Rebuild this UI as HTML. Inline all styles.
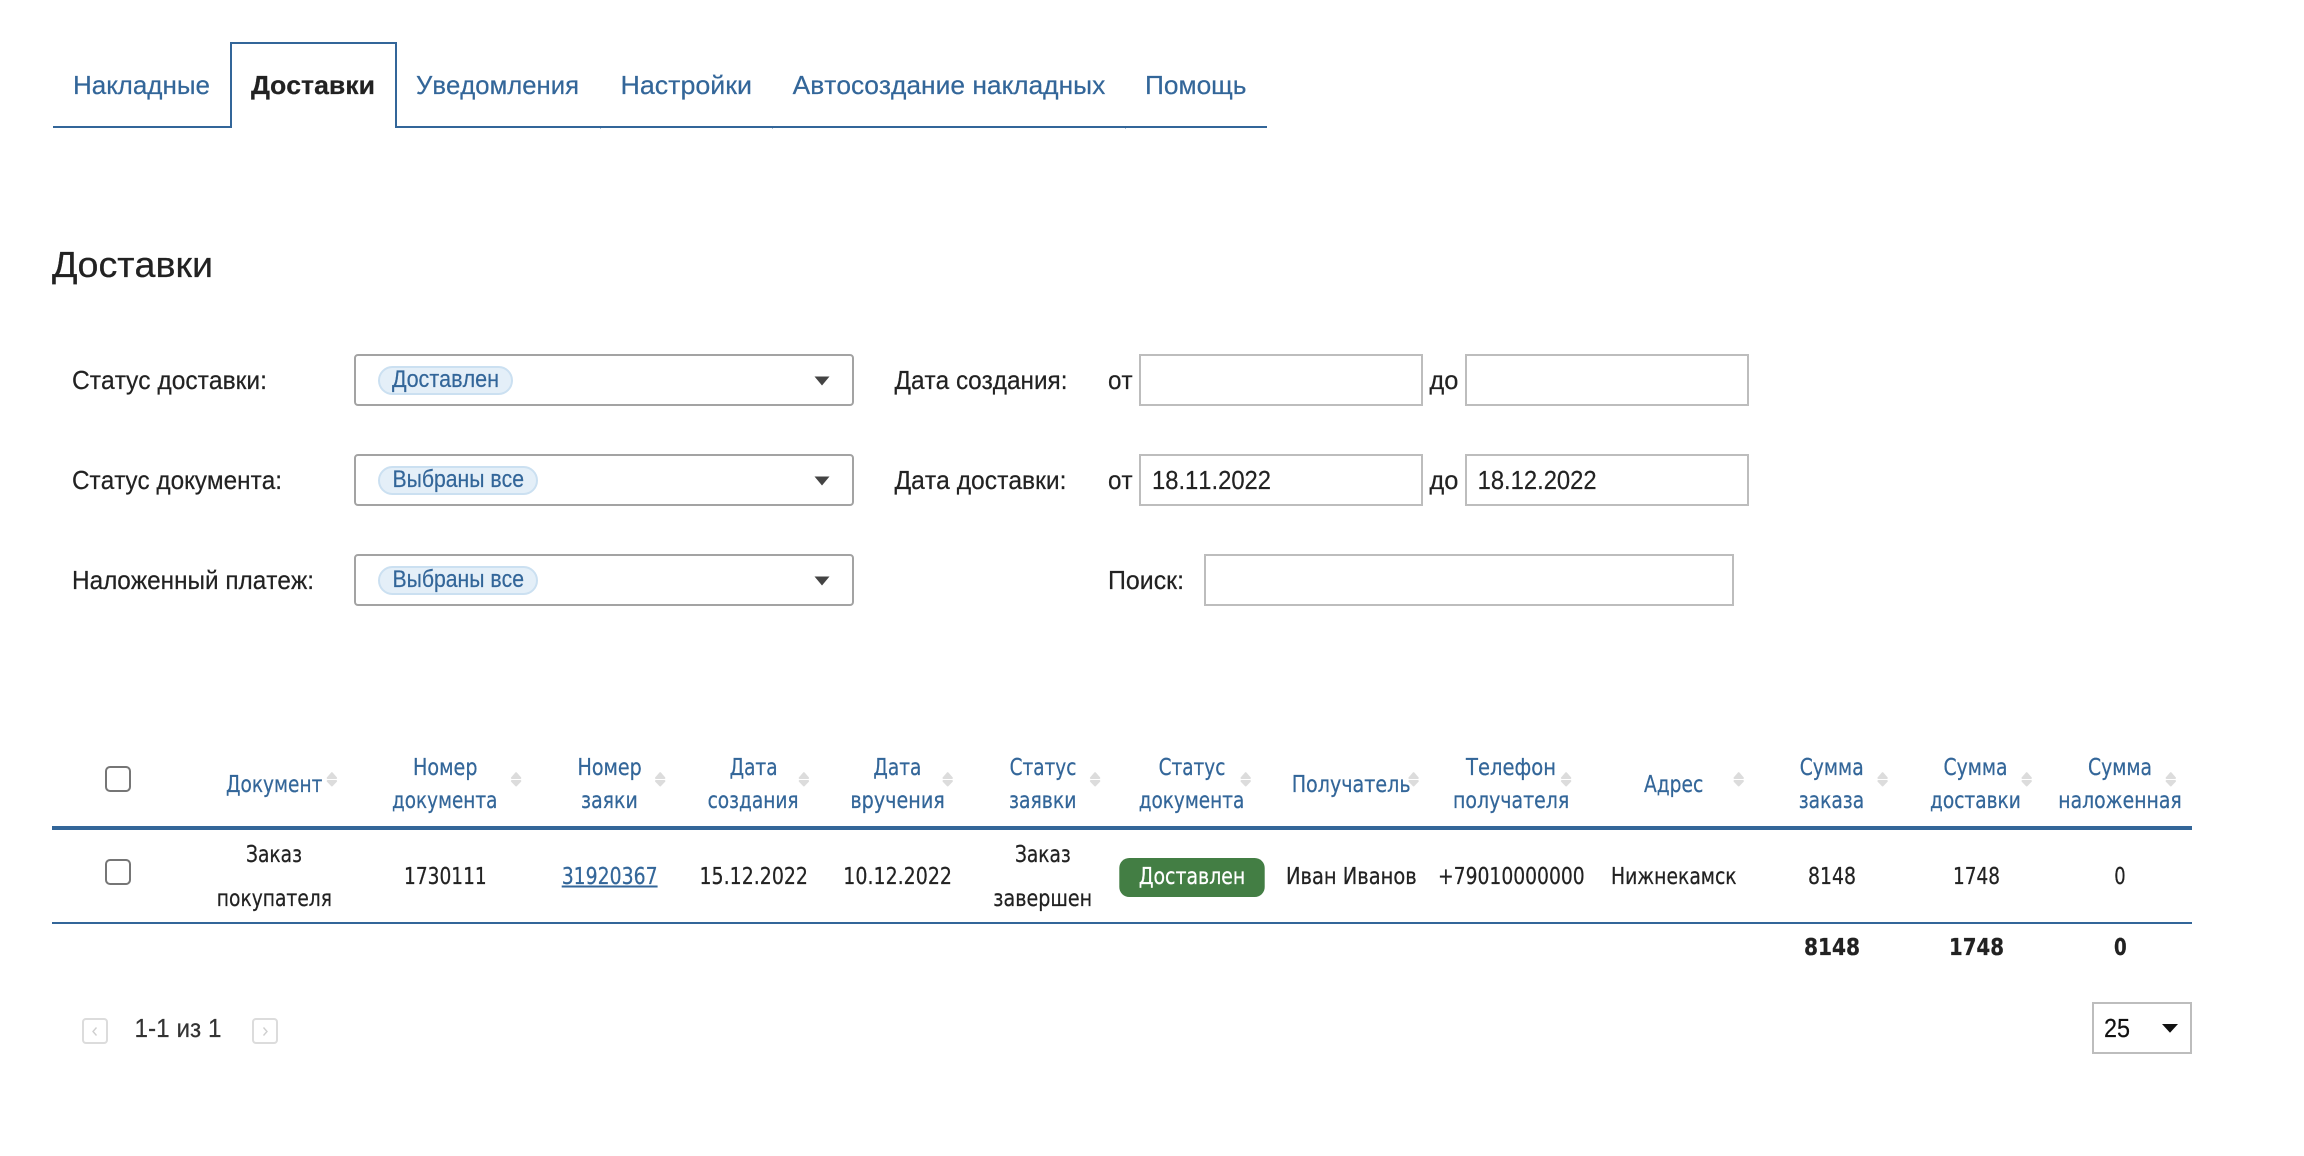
<!DOCTYPE html>
<html lang="ru">
<head>
<meta charset="utf-8">
<title>Доставки</title>
<style>
html,body{margin:0;padding:0;background:#fff;width:2304px;height:1156px;overflow:hidden}
svg{display:block}
text{font-kerning:none}
.s{font-family:"Liberation Sans",Arial,sans-serif;font-size:26px;fill:#222;stroke:#222;stroke-width:.2px}
.b{fill:#336699;stroke:#336699}
.h{font-size:36px;stroke-width:.25px}
.w{font-weight:700}
.d{font-family:"DejaVu Sans",Verdana,sans-serif;font-size:23px;fill:#222;stroke:#222;stroke-width:.25px}
.dh{fill:#336699;stroke:#336699}
.dw{font-weight:700}
.bx{fill:#fff;stroke:#a3a3a3;stroke-width:2}
.in{fill:#fff;stroke:#bdbdbd;stroke-width:2}
.chip{fill:#e4eff8;stroke:#cbe0f1;stroke-width:2}
.cb{fill:#fff;stroke:#767676;stroke-width:2}
.pg{fill:#fff;stroke:#dcdcdc;stroke-width:2}
</style>
</head>
<body>
<svg xmlns="http://www.w3.org/2000/svg" width="2304" height="1156" viewBox="0 0 2304 1156">
<defs>
<g id="sort"><path d="M5.4 1.2 L9.6 6 H1.2 Z M1.2 9 H9.6 L5.4 13.4 Z" fill="#dcdcdc" stroke="#dcdcdc" stroke-width="2" stroke-linejoin="round"/></g>
</defs>

<!-- tabs -->
<path d="M53 127H231V43H396V127H1267" fill="none" stroke="#336699" stroke-width="2"/>
<rect x="600" y="128" width="1" height="1" fill="#a9c2db"/>
<rect x="772" y="128" width="1" height="1" fill="#a9c2db"/>
<rect x="1125" y="128" width="1" height="1" fill="#a9c2db"/>
<text class="s b" x="73" y="94" textLength="137" lengthAdjust="spacingAndGlyphs">Накладные</text>
<text class="s w" x="251" y="94" textLength="124" lengthAdjust="spacingAndGlyphs">Доставки</text>
<text class="s b" x="416" y="94" textLength="163" lengthAdjust="spacingAndGlyphs">Уведомления</text>
<text class="s b" x="620.5" y="94" textLength="131.5" lengthAdjust="spacingAndGlyphs">Настройки</text>
<text class="s b" x="792.7" y="94" textLength="312.6" lengthAdjust="spacingAndGlyphs">Автосоздание накладных</text>
<text class="s b" x="1145" y="94" textLength="101.5" lengthAdjust="spacingAndGlyphs">Помощь</text>

<text class="s h" x="52" y="277" textLength="161" lengthAdjust="spacingAndGlyphs">Доставки</text>

<!-- filters -->
<text class="s" x="72" y="389" textLength="195" lengthAdjust="spacingAndGlyphs">Статус доставки:</text>
<text class="s" x="72" y="489" textLength="210" lengthAdjust="spacingAndGlyphs">Статус документа:</text>
<text class="s" x="72" y="589" textLength="242" lengthAdjust="spacingAndGlyphs">Наложенный платеж:</text>

<rect class="bx" x="355" y="355" width="498" height="50" rx="3"/>
<rect class="bx" x="355" y="455" width="498" height="50" rx="3"/>
<rect class="bx" x="355" y="555" width="498" height="50" rx="3"/>

<rect class="chip" x="379" y="367" width="133" height="27" rx="13.5"/>
<rect class="chip" x="379" y="467" width="158" height="27" rx="13.5"/>
<rect class="chip" x="379" y="567" width="158" height="27" rx="13.5"/>
<text class="s b" x="392" y="387" style="font-size:24px" textLength="107" lengthAdjust="spacingAndGlyphs">Доставлен</text>
<text class="s b" x="392.5" y="487" style="font-size:24px" textLength="131.5" lengthAdjust="spacingAndGlyphs">Выбраны все</text>
<text class="s b" x="392.5" y="587" style="font-size:24px" textLength="131.5" lengthAdjust="spacingAndGlyphs">Выбраны все</text>

<path d="M814.5 376.5H829.5L822 385.5Z" fill="#444"/>
<path d="M814.5 476.5H829.5L822 485.5Z" fill="#444"/>
<path d="M814.5 576.5H829.5L822 585.5Z" fill="#444"/>

<text class="s" x="894.5" y="389" textLength="173" lengthAdjust="spacingAndGlyphs">Дата создания:</text>
<text class="s" x="894.5" y="489" textLength="172" lengthAdjust="spacingAndGlyphs">Дата доставки:</text>
<text class="s" x="1108" y="389" textLength="24.6" lengthAdjust="spacingAndGlyphs">от</text>
<text class="s" x="1108" y="489" textLength="24.6" lengthAdjust="spacingAndGlyphs">от</text>
<text class="s" x="1429.4" y="389" textLength="29" lengthAdjust="spacingAndGlyphs">до</text>
<text class="s" x="1429.4" y="489" textLength="29" lengthAdjust="spacingAndGlyphs">до</text>
<text class="s" x="1108" y="589" textLength="76" lengthAdjust="spacingAndGlyphs">Поиск:</text>

<rect class="in" x="1140" y="355" width="282" height="50"/>
<rect class="in" x="1466" y="355" width="282" height="50"/>
<rect class="in" x="1140" y="455" width="282" height="50"/>
<rect class="in" x="1466" y="455" width="282" height="50"/>
<rect class="in" x="1205" y="555" width="528" height="50"/>
<text class="s" x="1152" y="489" textLength="119" lengthAdjust="spacingAndGlyphs">18.11.2022</text>
<text class="s" x="1477.6" y="489" textLength="119" lengthAdjust="spacingAndGlyphs">18.12.2022</text>

<!-- table lines -->
<rect x="52" y="826" width="2140" height="4" fill="#336699"/>
<rect x="52" y="922" width="2140" height="2" fill="#336699"/>

<!-- checkboxes -->
<rect class="cb" x="106" y="767" width="24" height="24" rx="4"/>
<rect class="cb" x="106" y="860" width="24" height="24" rx="4"/>

<!-- table head -->
<text class="d dh" x="226" y="792" textLength="96.4" lengthAdjust="spacingAndGlyphs">Документ</text>
<text class="d dh" x="413" y="775" textLength="64.5" lengthAdjust="spacingAndGlyphs">Номер</text>
<text class="d dh" x="392" y="808" textLength="105.4" lengthAdjust="spacingAndGlyphs">документа</text>
<text class="d dh" x="577.5" y="775" textLength="64.3" lengthAdjust="spacingAndGlyphs">Номер</text>
<text class="d dh" x="581" y="808" textLength="56.8" lengthAdjust="spacingAndGlyphs">заяки</text>
<text class="d dh" x="729.6" y="775" textLength="48" lengthAdjust="spacingAndGlyphs">Дата</text>
<text class="d dh" x="707.6" y="808" textLength="91" lengthAdjust="spacingAndGlyphs">создания</text>
<text class="d dh" x="873.4" y="775" textLength="48" lengthAdjust="spacingAndGlyphs">Дата</text>
<text class="d dh" x="850.4" y="808" textLength="94.4" lengthAdjust="spacingAndGlyphs">вручения</text>
<text class="d dh" x="1009.6" y="775" textLength="66.8" lengthAdjust="spacingAndGlyphs">Статус</text>
<text class="d dh" x="1009" y="808" textLength="67.4" lengthAdjust="spacingAndGlyphs">заявки</text>
<text class="d dh" x="1158.6" y="775" textLength="66.8" lengthAdjust="spacingAndGlyphs">Статус</text>
<text class="d dh" x="1138.7" y="808" textLength="105.6" lengthAdjust="spacingAndGlyphs">документа</text>
<text class="d dh" x="1291.7" y="792" textLength="118.9" lengthAdjust="spacingAndGlyphs">Получатель</text>
<text class="d dh" x="1466" y="775" textLength="90" lengthAdjust="spacingAndGlyphs">Телефон</text>
<text class="d dh" x="1453" y="808" textLength="116.3" lengthAdjust="spacingAndGlyphs">получателя</text>
<text class="d dh" x="1644" y="792" textLength="59.3" lengthAdjust="spacingAndGlyphs">Адрес</text>
<text class="d dh" x="1799.7" y="775" textLength="64" lengthAdjust="spacingAndGlyphs">Сумма</text>
<text class="d dh" x="1798.7" y="808" textLength="65.5" lengthAdjust="spacingAndGlyphs">заказа</text>
<text class="d dh" x="1943.5" y="775" textLength="64" lengthAdjust="spacingAndGlyphs">Сумма</text>
<text class="d dh" x="1930" y="808" textLength="90.8" lengthAdjust="spacingAndGlyphs">доставки</text>
<text class="d dh" x="2088" y="775" textLength="64" lengthAdjust="spacingAndGlyphs">Сумма</text>
<text class="d dh" x="2058.3" y="808" textLength="123.4" lengthAdjust="spacingAndGlyphs">наложенная</text>

<!-- sort icons -->
<use href="#sort" transform="translate(326.5,772)"/>
<use href="#sort" transform="translate(510.7,772)"/>
<use href="#sort" transform="translate(654.8,772)"/>
<use href="#sort" transform="translate(798.5,772)"/>
<use href="#sort" transform="translate(942.3,772)"/>
<use href="#sort" transform="translate(1089.7,772)"/>
<use href="#sort" transform="translate(1240.3,772)"/>
<use href="#sort" transform="translate(1408.2,772)"/>
<use href="#sort" transform="translate(1560.7,772)"/>
<use href="#sort" transform="translate(1733.3,772)"/>
<use href="#sort" transform="translate(1877.2,772)"/>
<use href="#sort" transform="translate(2021.3,772)"/>
<use href="#sort" transform="translate(2165.4,772)"/>

<!-- row -->
<text class="d" x="246" y="862" textLength="56" lengthAdjust="spacingAndGlyphs">Заказ</text>
<text class="d" x="216.8" y="906" textLength="115.2" lengthAdjust="spacingAndGlyphs">покупателя</text>
<text class="d" x="404" y="884" textLength="82.7" lengthAdjust="spacingAndGlyphs">1730111</text>
<text class="d dh" x="561.7" y="884" textLength="95.9" lengthAdjust="spacingAndGlyphs">31920367</text>
<rect x="561.7" y="885.5" width="95.9" height="2" fill="#336699"/>
<text class="d" x="699.5" y="884" textLength="108.5" lengthAdjust="spacingAndGlyphs">15.12.2022</text>
<text class="d" x="843.3" y="884" textLength="108.7" lengthAdjust="spacingAndGlyphs">10.12.2022</text>
<text class="d" x="1015" y="862" textLength="55.8" lengthAdjust="spacingAndGlyphs">Заказ</text>
<text class="d" x="993.3" y="906" textLength="98.9" lengthAdjust="spacingAndGlyphs">завершен</text>
<rect x="1119.3" y="858" width="145.4" height="39" rx="10" fill="#437e44"/>
<text class="d" x="1138.7" y="884" style="fill:#fff;stroke:#fff" textLength="106.6" lengthAdjust="spacingAndGlyphs">Доставлен</text>
<text class="d" x="1286" y="884" textLength="130.7" lengthAdjust="spacingAndGlyphs">Иван Иванов</text>
<text class="d" x="1438" y="884" textLength="146.7" lengthAdjust="spacingAndGlyphs">+79010000000</text>
<text class="d" x="1611" y="884" textLength="125.6" lengthAdjust="spacingAndGlyphs">Нижнекамск</text>
<text class="d" x="1808" y="884" textLength="48" lengthAdjust="spacingAndGlyphs">8148</text>
<text class="d" x="1953" y="884" textLength="47" lengthAdjust="spacingAndGlyphs">1748</text>
<text class="d" x="2114.3" y="884" textLength="11.4" lengthAdjust="spacingAndGlyphs">0</text>

<!-- totals -->
<text class="d dw" x="1804" y="955" textLength="56" lengthAdjust="spacingAndGlyphs">8148</text>
<text class="d dw" x="1949" y="955" textLength="55" lengthAdjust="spacingAndGlyphs">1748</text>
<text class="d dw" x="2114" y="955" textLength="12.7" lengthAdjust="spacingAndGlyphs">0</text>

<!-- pagination -->
<rect class="pg" x="83" y="1019" width="24" height="24" rx="3"/>
<path d="M96.5 1027.5L93 1031.5L96.5 1035.5" fill="none" stroke="#cfcfcf" stroke-width="1.4"/>
<text class="s" x="134.5" y="1037" style="fill:#333;stroke:#333" textLength="87" lengthAdjust="spacingAndGlyphs">1-1 из 1</text>
<rect class="pg" x="253" y="1019" width="24" height="24" rx="3"/>
<path d="M263.5 1027.5L267 1031.5L263.5 1035.5" fill="none" stroke="#cfcfcf" stroke-width="1.4"/>

<rect class="in" x="2093" y="1003" width="98" height="50"/>
<text class="s" x="2104" y="1037" style="fill:#111;stroke:#111" textLength="26" lengthAdjust="spacingAndGlyphs">25</text>
<path d="M2162 1024H2178L2170 1032.7Z" fill="#111"/>
</svg>
</body>
</html>
